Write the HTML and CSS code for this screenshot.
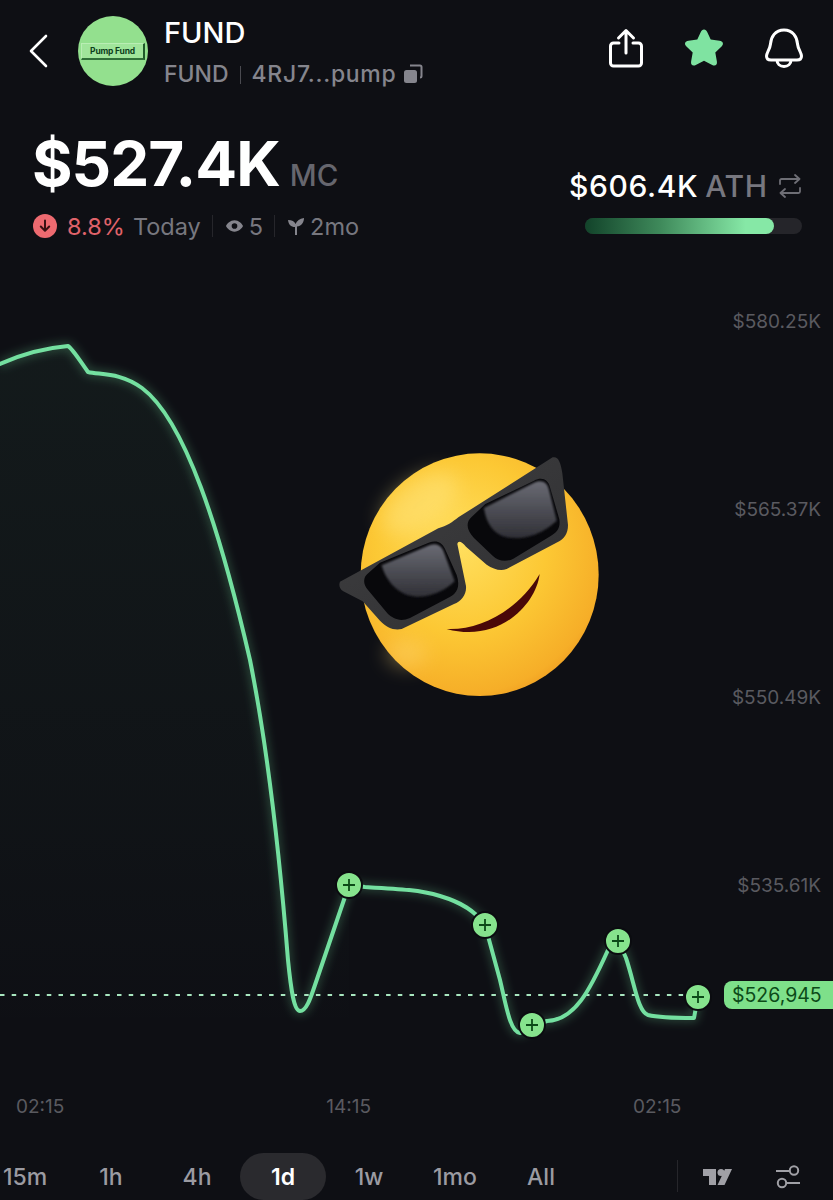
FILE: index.html
```html
<!DOCTYPE html>
<html>
<head>
    <title>FUND</title>
    <link rel="stylesheet" href="styles.css">
</head>
<body>
    <header class="top-bar">
        <svg class="back-icon" viewBox="0 0 20 34"><path d="M18 2 L3 17 L18 32"/></svg>
        <div class="avatar"><div class="avatar-tag">Pump Fund</div></div>
        <div class="token">
            <div class="token-name">FUND</div>
            <div class="token-sub">
                <span>FUND</span>
                <i class="token-sep"></i>
                <span class="token-address">4RJ7...pump</span>
                <svg class="copy-icon" viewBox="0 0 20 20"><path class="copy-back" d="M7 1.500h10a1.500 1.500 0 0 1 1.500 1.500v9a1.500 1.500 0 0 1-1.500 1.500"/><rect x="1" y="6" width="13" height="13" rx="2.500"/></svg>
            </div>
        </div>
        <div class="top-actions">
            <svg class="action-icon" viewBox="0 0 34 40"><path d="M17 25V3 M9.500 10 L17 2.500 L24.500 10 M10 15H4.500A3 3 0 0 0 1.500 18V35A3 3 0 0 0 4.500 38H29.500A3 3 0 0 0 32.500 35V18A3 3 0 0 0 29.500 15H24"/></svg>
            <svg class="action-icon star-icon" viewBox="0 0 42 40"><path d="M21 1.500 C22.500 1.500 23.500 2.500 24.200 4 L27.700 11.500 L36.500 12.800 C40 13.300 41 16 38.800 18.200 L32.300 24.500 L33.900 33.600 C34.500 37 32 38.500 29.200 37 L21 32.700 L12.800 37 C10 38.500 7.500 37 8.100 33.600 L9.700 24.500 L3.200 18.200 C1 16 2 13.300 5.500 12.800 L14.300 11.500 L17.800 4 C18.500 2.500 19.500 1.500 21 1.500Z"/></svg>
            <svg class="action-icon bell-icon" viewBox="0 0 38 40"><path d="M19 2 C10 2 6 9 5.500 16 C5 21 1.500 25 1.500 28 C1.500 30.500 3 32 6 32 H32 C35 32 36.500 30.500 36.500 28 C36.500 25 33 21 32.500 16 C32 9 28 2 19 2Z M12 32 C12 36 15 38.500 19 38.500 C23 38.500 26 36 26 32"/></svg>
        </div>
    </header>

    <section class="stats">
        <div class="stats-left">
            <div class="cap-row">
                <span class="cap-value">$527.4K</span>
                <span class="cap-label">MC</span>
            </div>
            <div class="meta-row">
                <svg class="down-icon" viewBox="0 0 24 24"><circle cx="12" cy="12" r="12"/><path d="M12 6.500V16.500 M7.800 12.500 L12 16.800 L16.200 12.500"/></svg>
                <span class="change">8.8%</span>
                <span class="meta-text">Today</span>
                <i class="meta-sep"></i>
                <svg class="eye-icon" viewBox="0 0 18 12"><path fill-rule="evenodd" d="M9 0C13.500 0 16.800 3.500 18 6C16.800 8.500 13.500 12 9 12C4.500 12 1.200 8.500 0 6C1.200 3.500 4.500 0 9 0ZM9 3A3 3 0 1 0 9 9A3 3 0 1 0 9 3Z"/></svg>
                <span class="meta-text meta-tight">5</span>
                <i class="meta-sep"></i>
                <svg class="sprout-icon" viewBox="0 0 16 18"><path d="M7 18V10C3 10 .5 7.500 0 3C4 3 6.500 4.500 7.500 7C9 3.500 11.500 1.500 16 1C16 6 13 9 9 9.500V18Z"/></svg>
                <span class="meta-text meta-tight">2mo</span>
            </div>
        </div>
        <div class="stats-right">
            <div class="ath-row">
                <span class="ath-value">$606.4K</span>
                <span class="ath-label">ATH</span>
                <svg class="swap-icon" viewBox="0 0 22 24"><path d="M1 10V6.500A1.500 1.500 0 0 1 2.500 5H20 M16 1 L20.500 5 L16 9 M21 14V17.500A1.500 1.500 0 0 1 19.500 19H2 M6 15 L1.500 19 L6 23"/></svg>
            </div>
            <div class="ath-track"><div class="ath-fill" style="width: 87%"></div></div>
        </div>
    </section>

    <main class="chart">
        <svg class="chart-canvas" viewBox="0 250 833 840">
            <defs>
                <linearGradient id="area" x1="0" y1="0" x2="0" y2="1">
                    <stop offset="0" stop-color="#6fdc9a" stop-opacity="0.055"/>
                    <stop offset="0.7" stop-color="#6fdc9a" stop-opacity="0.02"/>
                    <stop offset="1" stop-color="#6fdc9a" stop-opacity="0"/>
                </linearGradient>
                <filter id="glow" x="-10%" y="-10%" width="120%" height="120%">
                    <feGaussianBlur stdDeviation="5"/>
                </filter>
            </defs>
            <path class="area" d="M0 364 C22 354 45 348 68 346 C73 349 82 364 88 372 C100 375 120 372 142 388 C185 420 220 530 250 660 C268 750 280 860 288 960 C291 990 294 1011 300 1011 C306 1011 310 1000 315 985 L349 885 V1040 H0Z"/>
            <g class="line-glow" filter="url(#glow)">
                <path d="M0 364 C22 354 45 348 68 346 C73 349 82 364 88 372 C100 375 120 372 142 388 C185 420 220 530 250 660 C268 750 280 860 288 960 C291 990 294 1011 300 1011 C306 1011 310 1000 315 985 L349 885 L365 887 C400 889 420 890 440 896 C460 902 475 910 485 925 L500 980 C506 1005 510 1032 520 1033 L532 1026 L547 1021 C575 1020 590 990 608 950 L618 940 L626 958 C635 985 638 1012 648 1015 C660 1018 680 1018 694 1018 L698 996"/>
            </g>
            <line class="price-line" x1="0" y1="995" x2="690" y2="995"/>
            <path class="line" d="M0 364 C22 354 45 348 68 346 C73 349 82 364 88 372 C100 375 120 372 142 388 C185 420 220 530 250 660 C268 750 280 860 288 960 C291 990 294 1011 300 1011 C306 1011 310 1000 315 985 L349 885 L365 887 C400 889 420 890 440 896 C460 902 475 910 485 925 L500 980 C506 1005 510 1032 520 1033 L532 1026 L547 1021 C575 1020 590 990 608 950 L618 940 L626 958 C635 985 638 1012 648 1015 C660 1018 680 1018 694 1018 L698 996"/>
            <g class="marker"><circle cx="349" cy="885" r="13"/><path d="M343 885h12M349 879v12"/></g>
            <g class="marker"><circle cx="485" cy="925" r="13"/><path d="M479 925h12M485 919v12"/></g>
            <g class="marker"><circle cx="532" cy="1025" r="13"/><path d="M526 1025h12M532 1019v12"/></g>
            <g class="marker"><circle cx="618" cy="941" r="13"/><path d="M612 941h12M618 935v12"/></g>
            <g class="marker"><circle cx="698" cy="997" r="13"/><path d="M692 997h12M698 991v12"/></g>
        </svg>

        <div class="y-axis">
            <span>$580.25K</span>
            <span>$565.37K</span>
            <span>$550.49K</span>
            <span>$535.61K</span>
        </div>
        <div class="price-tag">$526,945</div>

        <svg class="emoji" viewBox="0 0 840 810">
            <defs>
                <radialGradient id="face" cx="0.42" cy="0.38" r="0.72">
                    <stop offset="0" stop-color="#ffdf5e"/>
                    <stop offset="0.5" stop-color="#fcc834"/>
                    <stop offset="0.85" stop-color="#f6ae28"/>
                    <stop offset="1" stop-color="#e88f1c"/>
                </radialGradient>
                <linearGradient id="frame" x1="0" y1="0" x2="1" y2="1">
                    <stop offset="0" stop-color="#404042"/>
                    <stop offset="1" stop-color="#2e2e30"/>
                </linearGradient>
                <linearGradient id="lens" x1="0.5" y1="0" x2="0.5" y2="1">
                    <stop offset="0" stop-color="#6a6b74"/>
                    <stop offset="1" stop-color="#303036"/>
                </linearGradient>
                <filter id="soft" x="-100%" y="-100%" width="300%" height="300%"><feGaussianBlur stdDeviation="28"/></filter>
                <filter id="lens-blur"><feGaussianBlur stdDeviation="3"/></filter>
            </defs>
            <ellipse cx="449" cy="404" rx="357" ry="364" fill="url(#face)"/>
            <ellipse cx="270" cy="190" rx="130" ry="70" fill="#ffe98a" opacity="0.45" filter="url(#soft)" transform="rotate(-35 270 190)"/>
            <ellipse cx="230" cy="640" rx="60" ry="40" fill="#ffdc7a" opacity="0.4" filter="url(#soft)"/>
            <path d="M30 425 L325 265 C350 258 368 246 385 232 L668 52 C684 48 692 65 697 100 L714 255 C714 282 702 297 682 307 L530 387 C510 394 490 387 470 374 L408 320 C395 305 385 300 382 312 L408 438 C410 464 394 484 372 492 L215 567 C190 572 170 562 150 542 L98 484 L40 454 C28 447 26 435 30 425Z" fill="url(#frame)"/>
            <path d="M112 402 L150 368 L296 308 C318 300 334 304 344 325 L380 405 C392 442 380 460 358 472 L240 534 C212 546 190 538 172 520 L114 450 C98 432 100 412 112 402Z" fill="#08080b"/>
            <path d="M155 376 L298 316 C318 308 332 314 340 332 L374 424 C338 458 295 472 258 470 C215 468 172 435 155 376Z" fill="url(#lens)" filter="url(#lens-blur)"/>
            <path d="M424 232 L466 192 L612 122 C636 110 654 118 660 142 L688 238 C692 264 680 278 662 288 L550 356 C526 368 504 362 488 347 L432 294 C408 270 408 246 424 232Z" fill="#08080b"/>
            <path d="M462 204 L612 128 C636 118 650 126 656 146 L680 242 C632 288 572 300 530 292 C492 284 468 250 462 204Z" fill="url(#lens)" filter="url(#lens-blur)"/>
            <path d="M350 567 C450 572 565 510 629 402 C618 495 505 610 350 567Z" fill="#4a0808"/>
        </svg>
    </main>

    <div class="x-axis">
        <span>02:15</span>
        <span>14:15</span>
        <span>02:15</span>
    </div>

    <nav class="tabs">
        <div class="tab-list">
            <span class="tab">15m</span>
            <span class="tab">1h</span>
            <span class="tab">4h</span>
            <span class="tab tab-active">1d</span>
            <span class="tab">1w</span>
            <span class="tab">1mo</span>
            <span class="tab">All</span>
        </div>
        <i class="tab-sep"></i>
        <svg class="tv-icon" viewBox="0 0 29 16"><path d="M0 0H13V16H6V7H0Z"/><circle cx="18" cy="3.500" r="3.500"/><path d="M22 0H29L21.500 16H14.500Z"/></svg>
        <svg class="sliders-icon" viewBox="0 0 24 24"><path d="M0 6H14 M10 18H24"/><circle cx="18" cy="5.500" r="4.200"/><circle cx="6" cy="18" r="4.200"/></svg>
    </nav>
</body>
</html>
```

FILE: styles.css
```css
* {
    box-sizing: border-box;
}

body {
    margin: 0;
    width: 833px;
    height: 1200px;
    overflow: hidden;
    display: flex;
    flex-direction: column;
    background-color: #0e0f14;
    color: white;
    font-family: 'Inter', sans-serif;
}

/* top bar */
.top-bar {
    height: 100px;
    display: flex;
    align-items: flex-start;
    padding: 16px 30px 0 28px;
}

.back-icon {
    width: 20px;
    height: 34px;
    margin-top: 18px;
    fill: none;
    stroke: white;
    stroke-width: 2.6;
    stroke-linecap: round;
    stroke-linejoin: round;
}

.avatar {
    width: 70px;
    height: 70px;
    margin-left: 30px;
    border-radius: 50%;
    background-color: #93e08e;
    display: flex;
    align-items: center;
    justify-content: center;
    overflow: hidden;
}

.avatar-tag {
    width: 64px;
    height: 17px;
    background-color: #a0e59b;
    border: 1px solid #b9eeb4;
    border-right: 2px solid #1f5a2a;
    border-bottom: 2px solid #2f7038;
    color: #0d3f1c;
    font-size: 8.5px;
    font-weight: 700;
    letter-spacing: -0.2px;
    line-height: 14px;
    text-align: center;
}

.token {
    margin-left: 16px;
}

.token-name {
    font-size: 29px;
    font-weight: 500;
    line-height: 34px;
}

.token-sub {
    display: flex;
    align-items: center;
    margin-top: 9px;
    font-size: 23px;
    font-weight: 500;
    line-height: 30px;
    color: #85858d;
}

.token-sep {
    width: 1px;
    height: 18px;
    margin: 2px 11px 0;
    background-color: #4a4a50;
}

.token-address {
    letter-spacing: 0.7px;
}

.copy-icon {
    width: 20px;
    height: 20px;
    margin-left: 7px;
    fill: #85858d;
}

.copy-back {
    fill: none;
    stroke: #85858d;
    stroke-width: 2;
}

.top-actions {
    margin-left: auto;
    display: flex;
    align-items: center;
    gap: 40px;
    margin-top: 12px;
}

.action-icon {
    width: 34px;
    height: 40px;
    fill: none;
    stroke: white;
    stroke-width: 3;
    stroke-linecap: round;
    stroke-linejoin: round;
}

.star-icon {
    width: 42px;
    fill: #7fe3a1;
    stroke: none;
}

.bell-icon {
    width: 38px;
}

/* market cap */
.stats {
    height: 150px;
    display: flex;
    justify-content: space-between;
    align-items: flex-start;
    padding: 0 31px 0 33px;
}

.cap-row {
    display: flex;
    align-items: baseline;
    height: 90px;
    padding-top: 29px;
    margin-left: -1px;
}

.cap-value {
    font-size: 62px;
    font-weight: 700;
    line-height: 70px;
    letter-spacing: -1px;
}

.cap-label {
    margin-left: 10px;
    font-size: 29.500px;
    font-weight: 500;
    color: #66666e;
}

.meta-row {
    display: flex;
    align-items: center;
    height: 30px;
    margin-top: 21px;
    font-size: 23.500px;
}

.down-icon {
    width: 24px;
    height: 24px;
    fill: #ed6a70;
}

.down-icon path {
    fill: none;
    stroke: #3a1113;
    stroke-width: 2;
    stroke-linecap: round;
    stroke-linejoin: round;
}

.change {
    margin-left: 10px;
    color: #e0636a;
}

.meta-text {
    margin-left: 8px;
    color: #77777f;
}

.meta-tight {
    margin-left: 6px;
}

.meta-sep {
    width: 1px;
    height: 22px;
    margin: 0 13px 0 11px;
    background-color: #26262b;
}

.eye-icon {
    width: 17px;
    height: 12px;
    fill: #85858d;
}

.sprout-icon {
    width: 16px;
    height: 18px;
    fill: #85858d;
}

.stats-right {
    width: 217px;
    padding-top: 68px;
}

.ath-row {
    display: flex;
    align-items: center;
    margin-left: -16px;
    height: 36px;
    font-size: 30px;
    font-weight: 500;
    letter-spacing: 0.6px;
    white-space: nowrap;
}

.ath-label {
    margin-left: 7px;
    color: #77777f;
}

.swap-icon {
    flex: none;
    width: 22px;
    height: 24px;
    margin-left: 11px;
    fill: none;
    stroke: #6e6e75;
    stroke-width: 1.8;
    stroke-linecap: round;
    stroke-linejoin: round;
}

.ath-track {
    width: 217px;
    height: 16px;
    margin-top: 14px;
    border-radius: 8px;
    background-color: #25252a;
}

.ath-fill {
    height: 100%;
    border-radius: 8px;
    background: linear-gradient(90deg, #12432a 0%, #3f8a5b 40%, #86e8a6 85%);
}

/* chart */
.chart {
    position: relative;
    height: 840px;
}

.chart-canvas {
    position: absolute;
    top: 0;
    left: 0;
    width: 833px;
    height: 840px;
}

.area {
    fill: url(#area);
}

.line-glow path {
    fill: none;
    stroke: #6fdc9a;
    stroke-width: 7;
    opacity: 0.3;
}

.line {
    fill: none;
    stroke: #74e0a0;
    stroke-width: 4;
    stroke-linejoin: round;
    stroke-linecap: round;
}

.price-line {
    stroke: #a8e6bf;
    stroke-width: 1.800;
    stroke-dasharray: 4.500 7.200;
}

.marker circle {
    fill: #86e38d;
    stroke: #0b0c10;
    stroke-width: 2;
}

.marker path {
    fill: none;
    stroke: #0c4a18;
    stroke-width: 1.800;
}

.y-axis {
    position: absolute;
    top: 60px;
    right: 12px;
    display: flex;
    flex-direction: column;
    align-items: flex-end;
    gap: 164px;
    font-size: 19px;
    line-height: 24px;
    color: #5a5a60;
}

.price-tag {
    position: absolute;
    top: 731px;
    right: 0;
    width: 109px;
    height: 28px;
    padding-left: 8px;
    border-radius: 8px 0 0 8px;
    background-color: #7ee08a;
    color: #0c4a18;
    font-size: 19.500px;
    line-height: 28px;
}

.emoji {
    position: absolute;
    top: 190px;
    left: 330px;
    width: 280px;
    height: 270px;
}

/* time axis */
.x-axis {
    height: 32px;
    font-size: 19px;
    line-height: 34px;
    color: #5a5a60;
    display: flex;
    padding-left: 16px;
    gap: 262px;
}

/* interval tabs */
.tabs {
    height: 78px;
    display: flex;
    align-items: flex-end;
}

.tab-list {
    display: flex;
    margin-left: -18px;
}

.tab {
    width: 86px;
    height: 47px;
    border-radius: 24px;
    text-align: center;
    font-size: 23px;
    font-weight: 500;
    line-height: 48px;
    color: #9b9ba2;
}

.tab-active {
    background-color: #2a2a2e;
    color: white;
    font-weight: 600;
}

.tab-sep {
    width: 1px;
    height: 32px;
    margin: 0 0 8px 93px;
    background-color: #26262b;
}

.tv-icon {
    width: 29px;
    height: 16px;
    margin: 0 0 15px 25px;
    fill: #a0a0a6;
}

.sliders-icon {
    width: 24px;
    height: 24px;
    margin: 0 0 11px 44px;
    fill: none;
    stroke: #a0a0a6;
    stroke-width: 2;
}
```
